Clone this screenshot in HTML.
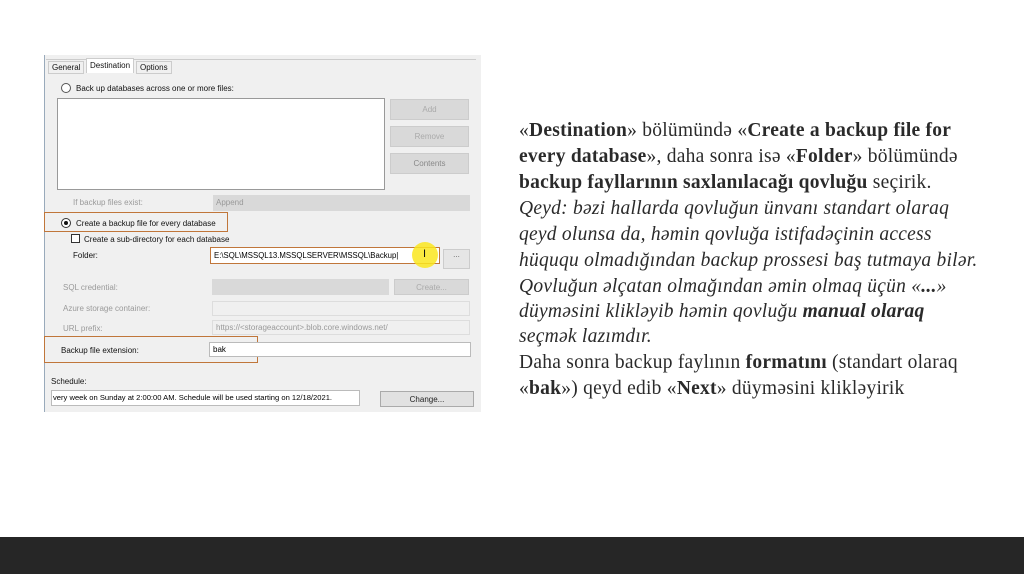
<!DOCTYPE html>
<html><head><meta charset="utf-8"><style>
*{margin:0;padding:0;box-sizing:border-box}
body{width:1024px;height:574px;background:#fff;position:relative;overflow:hidden;font-family:"Liberation Sans",sans-serif}
.a{position:absolute}
.ss{left:44px;top:55px;width:437px;height:357px;background:#f0f0f0;border-left:1px solid #9ab;}
.s{font-size:8px;color:#111;white-space:nowrap}
.g{color:#9a9a9a}
.btn{background:#d9d9d9;border:1px solid #ccc;font-size:8px;color:#aaa;text-align:center}
.inp{background:#fff;border:1px solid #bbb;font-size:8px;white-space:nowrap;padding-left:3px}
.dis{background:#f0f0f0;border:1px solid #ddd;font-size:8px;color:#999;padding-left:3px;white-space:nowrap}
.or{border:1.5px solid #c0763a}
.t{position:absolute;left:519px;font-family:"Liberation Serif",serif;font-size:19.5px;color:#2a2a2a;white-space:nowrap;letter-spacing:0.25px;line-height:22px}
</style></head><body>
<div class="a ss"></div>
<div class="a" style="left:46px;top:59px;width:430px;height:352px;border-top:1px solid #ccc"></div>
<div class="a s" style="left:48px;top:61px;border:1px solid #ccc;padding:1px 3px;background:#f0f0f0">General</div>
<div class="a s" style="left:86px;top:58px;border:1px solid #ccc;border-bottom:none;padding:2px 3px 3px;background:#fff">Destination</div>
<div class="a s" style="left:136px;top:61px;border:1px solid #ccc;padding:1px 3px;background:#f0f0f0">Options</div>
<div class="a" style="left:61px;top:83px;width:10px;height:10px;border:1px solid #555;border-radius:50%;background:#fff"></div>
<div class="a s" style="left:76px;top:84px">Back up databases across one or more files:</div>
<div class="a" style="left:57px;top:98px;width:328px;height:92px;background:#fff;border:1px solid #999"></div>
<div class="a btn" style="left:390px;top:99px;width:79px;height:21px;line-height:20px">Add</div>
<div class="a btn" style="left:390px;top:126px;width:79px;height:21px;line-height:20px">Remove</div>
<div class="a btn" style="left:390px;top:153px;width:79px;height:21px;line-height:20px;color:#888">Contents</div>
<div class="a s g" style="left:73px;top:198px">If backup files exist:</div>
<div class="a" style="left:213px;top:195px;width:257px;height:16px;background:#d9d9d9;font-size:8px;color:#999;padding:3px 3px">Append</div>
<div class="a or" style="left:44px;top:212px;width:184px;height:20px"></div>
<div class="a" style="left:61px;top:218px;width:10px;height:10px;border:1px solid #333;border-radius:50%;background:#fff"></div>
<div class="a" style="left:64px;top:221px;width:4px;height:4px;border-radius:50%;background:#111"></div>
<div class="a s" style="left:76px;top:219px">Create a backup file for every database</div>
<div class="a" style="left:71px;top:234px;width:9px;height:9px;border:1px solid #333;background:#fff"></div>
<div class="a s" style="left:84px;top:235px">Create a sub-directory for each database</div>
<div class="a s" style="left:73px;top:251px">Folder:</div>
<div class="a inp or" style="left:210px;top:247px;width:230px;height:17px;line-height:15px;font-size:7.8px">E:\SQL\MSSQL13.MSSQLSERVER\MSSQL\Backup|</div>
<div class="a" style="left:412px;top:242px;width:26px;height:26px;border-radius:50%;background:rgba(250,230,30,0.85)"></div>
<div class="a s" style="left:423px;top:248px;font-size:11px">I</div>
<div class="a btn" style="left:443px;top:249px;width:27px;height:20px;background:#e6e6e6;color:#666">...</div>
<div class="a s g" style="left:63px;top:283px">SQL credential:</div>
<div class="a" style="left:212px;top:279px;width:177px;height:16px;background:#d9d9d9"></div>
<div class="a btn" style="left:394px;top:279px;width:75px;height:16px;line-height:15px">Create...</div>
<div class="a s g" style="left:63px;top:304px">Azure storage container:</div>
<div class="a dis" style="left:212px;top:301px;width:258px;height:15px"></div>
<div class="a s g" style="left:63px;top:324px">URL prefix:</div>
<div class="a dis" style="left:212px;top:320px;width:258px;height:15px;line-height:13px">https://&lt;storageaccount&gt;.blob.core.windows.net/</div>
<div class="a or" style="left:44px;top:336px;width:214px;height:27px"></div>
<div class="a s" style="left:61px;top:346px">Backup file extension:</div>
<div class="a inp" style="left:209px;top:342px;width:262px;height:15px;line-height:13px">bak</div>
<div class="a s" style="left:51px;top:377px">Schedule:</div>
<div class="a inp" style="left:51px;top:390px;width:309px;height:16px;line-height:14px;font-size:7.6px;padding-left:1px">very week on Sunday at 2:00:00 AM. Schedule will be used starting on 12/18/2021.</div>
<div class="a btn" style="left:380px;top:391px;width:94px;height:16px;line-height:15px;background:#e1e1e1;color:#222;border-color:#aaa">Change...</div>

<div class="t" style="top:120px">«<b>Destination</b>» bölümündə «<b>Create a backup file for</b></div>
<div class="t" style="top:146px"><b>every database</b>», daha sonra isə «<b>Folder</b>» bölümündə</div>
<div class="t" style="top:172px"><b>backup fayllarının saxlanılacağı qovluğu</b> seçirik.</div>
<div class="t" style="top:198px"><i>Qeyd: bəzi hallarda qovluğun ünvanı standart olaraq</i></div>
<div class="t" style="top:224px"><i>qeyd olunsa da, həmin qovluğa istifadəçinin access</i></div>
<div class="t" style="top:250px"><i>hüququ olmadığından backup prossesi baş tutmaya bilər.</i></div>
<div class="t" style="top:276px"><i>Qovluğun əlçatan olmağından əmin olmaq üçün «<b>...</b>»</i></div>
<div class="t" style="top:301px"><i>düyməsini klikləyib həmin qovluğu <b>manual olaraq</b></i></div>
<div class="t" style="top:326px"><i>seçmək lazımdır.</i></div>
<div class="t" style="top:352px">Daha sonra backup faylının <b>formatını</b> (standart olaraq</div>
<div class="t" style="top:378px">«<b>bak</b>») qeyd edib «<b>Next</b>» düyməsini klikləyirik</div>

<div class="a" style="left:0;top:537px;width:1024px;height:37px;background:#262626"></div>
</body></html>
